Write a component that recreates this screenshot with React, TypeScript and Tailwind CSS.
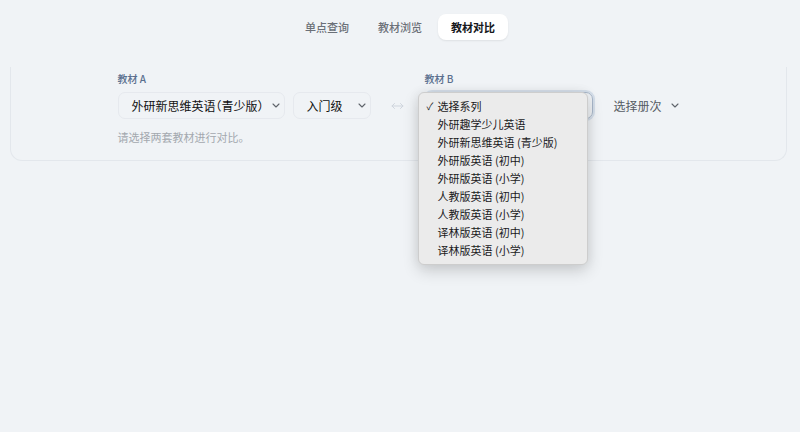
import React from 'react'

const seriesOptions = [
  '选择系列',
  '外研趣学少儿英语',
  '外研新思维英语 (青少版)',
  '外研版英语 (初中)',
  '外研版英语 (小学)',
  '人教版英语 (初中)',
  '人教版英语 (小学)',
  '译林版英语 (初中)',
  '译林版英语 (小学)',
]

function Chevron({ className = '' }: { className?: string }) {
  return (
    <svg className={`w-[8px] h-[5px] shrink-0 ${className}`} viewBox="0 0 8 5" fill="none">
      <path d="M1 1l3 3 3-3" stroke="currentColor" strokeWidth="1.1" strokeLinecap="round" strokeLinejoin="round" />
    </svg>
  )
}

function Select({ label, width, muted, bordered = true }: { label: string, width: string, muted?: boolean, bordered?: boolean }) {
  return (
    <div
      className={`${width} shrink-0 h-[27px] flex items-center justify-between pl-[13px] pr-[4px] rounded-[7px] border ${
        bordered ? 'border-[#e6e9ee]' : 'border-transparent'
      }`}
    >
      <span
        className={`whitespace-nowrap text-[12px] leading-none [font-feature-settings:'halt'] ${
          muted ? 'text-[#555b63]' : 'text-[#111]'
        }`}
      >
        {label}
      </span>
      <Chevron className="text-[#5f646b]" />
    </div>
  )
}

export default function App() {
  return (
    <div className="min-h-screen w-full bg-[#f0f3f6] font-['Noto_Sans_CJK_SC','Noto_Sans',sans-serif]">
      {/* Tabs */}
      <div className="h-[67px] pt-[14px] flex justify-center gap-[3px]">
        <button className="h-[26px] px-[13px] rounded-[8px] text-[11px] font-medium text-[#6b7078]">单点查询</button>
        <button className="h-[26px] px-[13px] rounded-[8px] text-[11px] font-medium text-[#6b7078]">教材浏览</button>
        <button className="h-[26px] px-[13px] rounded-[8px] text-[11px] font-semibold text-[#16181c] bg-white shadow-[0_1px_2px_rgba(0,0,0,0.08)]">
          教材对比
        </button>
      </div>

      {/* Compare card */}
      <div className="ml-[10px] mr-[13px] border-x border-b border-[#e3e7ec] rounded-b-[12px] pt-[5px] pb-[15px] pl-[4px] flex justify-center">
        <div className="flex flex-col">
          <div className="flex items-end">
            {/* A */}
            <div className="flex flex-col shrink-0">
              <div className="h-[14px] mb-[6px] text-[10px] font-medium text-[#5a6f8e] leading-[14px]">教材 A</div>
              <div className="flex gap-[8px]">
                <Select label="外研新思维英语（青少版）" width="w-[167px]" />
                <Select label="入门级" width="w-[78px]" />
              </div>
            </div>

            {/* swap */}
            <div className="w-[54px] shrink-0 h-[27px] flex items-center justify-center">
              <svg className="w-[13px] h-[8px] text-[#cfd5dd]" viewBox="0 0 13 8" fill="none">
                <path d="M1 4h11M3.5 1.5L1 4l2.5 2.5M9.5 1.5L12 4 9.5 6.5" stroke="currentColor" strokeWidth="1" strokeLinecap="round" strokeLinejoin="round" />
              </svg>
            </div>

            {/* B */}
            <div className="flex flex-col shrink-0">
              <div className="h-[14px] mb-[6px] text-[10px] font-medium text-[#5a6f8e] leading-[14px]">教材 B</div>
              <div className="flex gap-[7px]">
                <div className="relative shrink-0">
                  <div className="w-[168px] h-[27px] flex items-center justify-end pr-[4px] rounded-[7px] border border-[#a9b8cb] ring-2 ring-[#c9d6e6]/70">
                    <Chevron className="text-[#333]" />
                  </div>
                  {/* open menu */}
                  <div className="absolute left-[-7px] top-0 w-[170px] pt-[4px] pb-[5px] rounded-[6px] bg-[#ebebeb] border border-[#cdcdcd] shadow-[0_6px_16px_rgba(0,0,0,0.16),0_0_12px_rgba(0,0,0,0.06)] z-10">
                    {seriesOptions.map((opt, i) => (
                      <div key={opt} className="h-[18px] flex items-center pl-[8px] text-[11px] text-[#1a1a1c] whitespace-nowrap">
                        <span className="w-[11px] text-[10px] leading-none">{i === 0 ? '✓' : ''}</span>
                        <span className="leading-none">{opt}</span>
                      </div>
                    ))}
                  </div>
                </div>
                <Select label="选择册次" width="w-[84px]" muted bordered={false} />
              </div>
            </div>
          </div>

          <div className="mt-[10px] text-[11px] leading-[16px] text-[#a3a8ae]">请选择两套教材进行对比。</div>
        </div>
      </div>
    </div>
  )
}
